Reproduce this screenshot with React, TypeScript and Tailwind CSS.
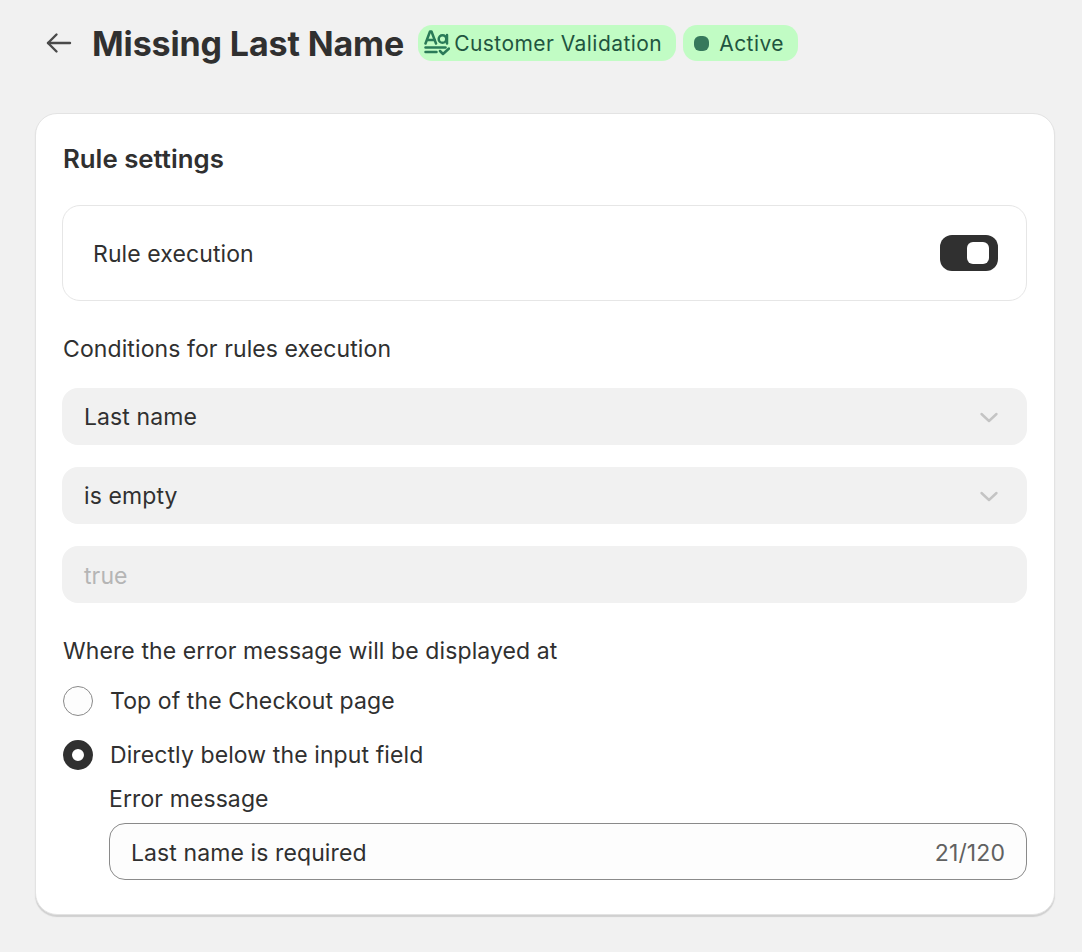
const text = "text-[#303030]";

function AgCheck() {
  return (
    <svg width="26" height="26" viewBox="0 0 26 26" fill="none" stroke="#2a7a58" strokeWidth="2.5" strokeLinecap="round" strokeLinejoin="round" className="shrink-0">
      <path d="M1.5 13.5 6 1.5h1.5l4.5 12" />
      <path d="M3.5 10h7" />
      <circle cx="18.5" cy="9" r="3.8" />
      <path d="M23 5v8.5" />
      <path d="M1.5 17.5h20" />
      <path d="M1.5 22h11" />
      <path d="m16 21 3 3 6-5.5" />
    </svg>
  );
}

function Chevron() {
  return (
    <svg width="20" height="20" viewBox="0 0 20 20" fill="none" stroke="#c4c4c4" strokeWidth="2.4" strokeLinecap="round" strokeLinejoin="round">
      <path d="m2.5 6 7.5 7 7.5-7" />
    </svg>
  );
}

function SelectRow({ label, chevron = true, muted = false }: { label: string; chevron?: boolean; muted?: boolean }) {
  return (
    <div className={`flex h-[57px] items-center justify-between rounded-2xl bg-[#f1f1f1] pl-[22px] pr-[28px] ${muted ? "pt-[3px] text-[#b5b5b5]" : "pt-[3px] pb-[1px]"}`}>
      <span>{label}</span>
      {chevron && <Chevron />}
    </div>
  );
}

export default function App() {
  return (
    <div
      className={`h-[952px] w-[1082px] overflow-hidden bg-[#f1f1f1] px-[35px] pt-[25px] text-[23px] tracking-[0.1px] ${text}`}
      style={{ fontFamily: "Inter, sans-serif" }}
    >
      <div className="flex h-[36px] items-center">
        <svg width="28" height="28" viewBox="0 0 28 28" fill="none" stroke="#4a4a4a" strokeWidth="2.4" strokeLinecap="round" strokeLinejoin="round" className="ml-[10px]">
          <path d="M25 14H3" />
          <path d="m11.5 5.5-8.5 8.5 8.5 8.5" />
        </svg>
        <h1 className="ml-[19px] text-[34px] font-bold tracking-[-0.13px]">Missing Last Name</h1>
        <div className="ml-[14px] flex h-[36px] items-center gap-[4px] rounded-[14px] bg-[#c1fcc4] pl-[6px] pr-[14px] text-[21px] tracking-[0.45px] text-[#1f5540]">
          <AgCheck />
          <span className="pt-[2px]">Customer Validation</span>
        </div>
        <div className="ml-[7px] flex h-[36px] items-center rounded-[14px] bg-[#c1fcc4] pl-[11px] pr-[14px] text-[21px] tracking-[0.45px] text-[#1f5540]">
          <span className="h-[15px] w-[15px] rounded-[6px] bg-[#36795c]" />
          <span className="ml-[10px] pt-[2px]">Active</span>
        </div>
      </div>

      <div className="mt-[52px] h-[802px] w-[1020px] rounded-[22px] border border-[#e3e3e3] bg-white pl-[26px] pr-[27px] pt-[28px] shadow-[0_2px_1px_#d0d0d0]">
        <h2 className="pl-[1px] text-[25.8px] font-semibold leading-[34px] tracking-normal">Rule settings</h2>

        <div className="mt-[29px] flex h-[96px] items-center justify-between rounded-[18px] border border-[#e6e6e6] pl-[30px] pr-[28px] pt-[2px]">
          <span>Rule execution</span>
          <span className="-mt-[2px] flex h-[36px] w-[58px] items-center justify-end rounded-[12px] bg-[#303030] pr-[9px]">
            <span className="h-[22px] w-[22px] rounded-[6px] bg-white" />
          </span>
        </div>

        <p className="mt-[32px] pl-[1px] leading-[32px]">Conditions for rules execution</p>

        <div className="mt-[23px] flex flex-col gap-[22px]">
          <SelectRow label="Last name" />
          <SelectRow label="is empty" />
          <SelectRow label="true" chevron={false} muted />
        </div>

        <p className="mt-[32px] pl-[1px] leading-[32px]">Where the error message will be displayed at</p>

        <div className="mt-[18px] flex items-center gap-[17px] pl-[1px] leading-[32px]">
          <span className="h-[30px] w-[30px] rounded-full border border-[#8a8a8a] bg-[#fdfdfd]" />
          <span>Top of the Checkout page</span>
        </div>
        <div className="mt-[22px] flex items-center gap-[17px] pl-[1px] leading-[32px]">
          <span className="h-[30px] w-[30px] rounded-full border-[9px] border-[#303030] bg-white" />
          <span>Directly below the input field</span>
        </div>

        <div className="ml-[47px]">
          <p className="mt-[12px] leading-[32px]">Error message</p>
          <div className="mt-[8px] flex h-[57px] items-center justify-between rounded-2xl border border-[#8a8a8a] bg-[#fdfdfd] pl-[21px] pr-[21px] pt-[4px]">
            <span>Last name is required</span>
            <span className="text-[#616161]">21/120</span>
          </div>
        </div>
      </div>
    </div>
  );
}
